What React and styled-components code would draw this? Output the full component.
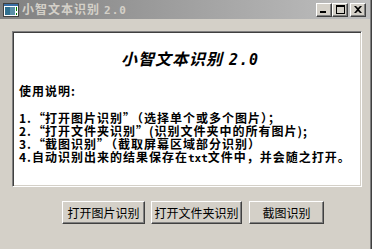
import React from "react";
import styled, { createGlobalStyle } from "styled-components";

const Global = createGlobalStyle`
  html, body { margin: 0; padding: 0; background: #d4d0c8; }
  body { font-family: "Noto Sans CJK SC", "DejaVu Sans", sans-serif; }
`;

const Window = styled.div`
  width: 372px;
  height: 249px;
  box-sizing: border-box;
  background: #d4d0c8;
  border-right: 1px solid #404040;
  box-shadow: inset -1px 0 0 #808080;
  display: flex;
  flex-direction: column;
  overflow: hidden;
`;

const TitleBar = styled.div`
  height: 19px;
  flex: none;
  margin-right: 1px;
  background: linear-gradient(to right, #808080, #c0c0c0);
  display: flex;
  align-items: center;
  padding: 0 4px 0 3px;
  gap: 3px;
`;

const TitleText = styled.span`
  flex: 1;
  color: #d4d0c8;
  font-size: 12px;
  font-weight: 700;
  letter-spacing: 1px;
  line-height: 19px;
  white-space: nowrap;
`;

const Version = styled.span`
  font-family: "DejaVu Sans Mono", "Liberation Mono", monospace;
  font-size: 11px;
  font-weight: 700;
  letter-spacing: 1px;
  margin-left: 4px;
`;

const Controls = styled.div`
  display: flex;
  align-items: center;
`;

const CtlButton = styled.div`
  width: 16px;
  height: 14px;
  box-sizing: border-box;
  background: #d4d0c8;
  border-top: 1px solid #ffffff;
  border-left: 1px solid #ffffff;
  border-right: 1px solid #404040;
  border-bottom: 1px solid #404040;
  box-shadow: inset -1px -1px 0 #808080;
  margin-left: ${(p) => (p.$gap ? "2px" : "0")};
  display: flex;
  align-items: center;
  justify-content: center;
`;

const Body = styled.div`
  flex: 1;
  display: flex;
  flex-direction: column;
  padding: 12px 9px 0 12px;
`;

const Panel = styled.div`
  height: 156px;
  box-sizing: border-box;
  background: #ffffff;
  border-top: 1px solid #808080;
  border-left: 1px solid #808080;
  border-right: 1px solid #ffffff;
  border-bottom: 1px solid #ffffff;
  box-shadow: inset 1px 1px 0 #404040, inset -1px -1px 0 #d4d0c8;
  padding: 16px 4px 0 6px;
  color: #000;
`;

const Heading = styled.div`
  text-align: center;
  font-size: 16px;
  line-height: 20px;
  font-weight: 700;
  font-style: italic;
  letter-spacing: 1px;
  padding-left: 4px;
`;

const HeadingVer = styled.span`
  font-family: "DejaVu Sans Mono", "Liberation Mono", monospace;
  font-size: 15px;
  margin-left: 6px;
`;

const Label = styled.div`
  font-size: 12px;
  font-weight: 700;
  line-height: 13px;
  margin-top: 14px;
  letter-spacing: 1px;
`;

const List = styled.div`
  margin-top: 14px;
  display: flex;
  flex-direction: column;
`;

const Line = styled.div`
  font-size: 12px;
  font-weight: 700;
  line-height: 13px;
  letter-spacing: 1px;
  white-space: nowrap;
`;

const Quote = styled.span`
  display: inline-block;
  width: 13px;
  line-height: 13px;
  letter-spacing: 0;
  text-align: ${(p) => (p.$open ? "right" : "left")};
`;

const OpenParen = styled.span`
  margin-left: -5px;
`;

const Mono = styled.span`
  font-family: "DejaVu Sans Mono", "Liberation Mono", monospace;
  font-size: 11px;
  letter-spacing: 0;
`;

const ButtonRow = styled.div`
  display: flex;
  padding-left: 50px;
  margin-top: 14px;
  gap: 6px;
`;

const Button = styled.button`
  width: ${(p) => p.$w}px;
  height: 23px;
  margin-left: ${(p) => p.$ml || 0}px;
  box-sizing: border-box;
  background: #d4d0c8;
  border-top: 1px solid #ffffff;
  border-left: 1px solid #ffffff;
  border-right: 1px solid #404040;
  border-bottom: 1px solid #404040;
  box-shadow: inset -1px -1px 0 #808080;
  font-family: "Noto Sans CJK SC", sans-serif;
  font-size: 12px;
  color: #000;
  padding: 0;
  display: flex;
  align-items: center;
  justify-content: center;
`;

const AppIcon = () => (
  <svg width="16" height="16" viewBox="0 0 16 16">
    <rect x="0.5" y="1.5" width="15" height="13" fill="#fff" stroke="#404040" />
    <rect x="1" y="2" width="14" height="2" fill="#3a6ea5" />
    <rect x="2" y="5" width="10" height="8" fill="#5a8fa8" />
    <rect x="2" y="5" width="5" height="8" fill="#2f6f8f" />
    <rect x="13" y="5" width="1" height="4" fill="#008000" />
    <rect x="13" y="11" width="1" height="2" fill="#008000" />
  </svg>
);

const Q = ({ children }) => (
  <>
    <Quote $open>“</Quote>
    {children}
    <Quote>”</Quote>
  </>
);

export default function App() {
  return (
    <>
      <Global />
      <Window>
        <TitleBar>
          <AppIcon />
          <TitleText>
            小智文本识别<Version>2.0</Version>
          </TitleText>
          <Controls>
            <CtlButton>
              <svg width="8" height="7" viewBox="0 0 8 7">
                <rect x="0" y="5" width="6" height="2" fill="#000" />
              </svg>
            </CtlButton>
            <CtlButton>
              <svg width="9" height="9" viewBox="0 0 9 9">
                <rect x="0.5" y="0.5" width="8" height="8" fill="none" stroke="#000" />
                <rect x="0" y="0" width="9" height="2" fill="#000" />
              </svg>
            </CtlButton>
            <CtlButton $gap>
              <svg width="8" height="7" viewBox="0 0 8 7">
                <path d="M0 0h2l2 2 2-2h2L5 3.5 8 7H6L4 5 2 7H0l3-3.5z" fill="#000" />
              </svg>
            </CtlButton>
          </Controls>
        </TitleBar>
        <Body>
          <Panel>
            <Heading>
              小智文本识别<HeadingVer>2.0</HeadingVer>
            </Heading>
            <Label>使用说明:</Label>
            <List>
              <Line>
                1.<Q>打开图片识别</Q><OpenParen>（</OpenParen>选择单个或多个图片）；
              </Line>
              <Line>2.<Q>打开文件夹识别</Q>(识别文件夹中的所有图片);</Line>
              <Line>
                3.<Q>截图识别</Q><OpenParen>（</OpenParen>截取屏幕区域部分识别）
              </Line>
              <Line>
                4.自动识别出来的结果保存在<Mono>txt</Mono>文件中，并会随之打开。
              </Line>
            </List>
          </Panel>
          <ButtonRow>
            <Button $w={83}>打开图片识别</Button>
            <Button $w={91}>打开文件夹识别</Button>
            <Button $w={75} $ml={1}>截图识别</Button>
          </ButtonRow>
        </Body>
      </Window>
    </>
  );
}
